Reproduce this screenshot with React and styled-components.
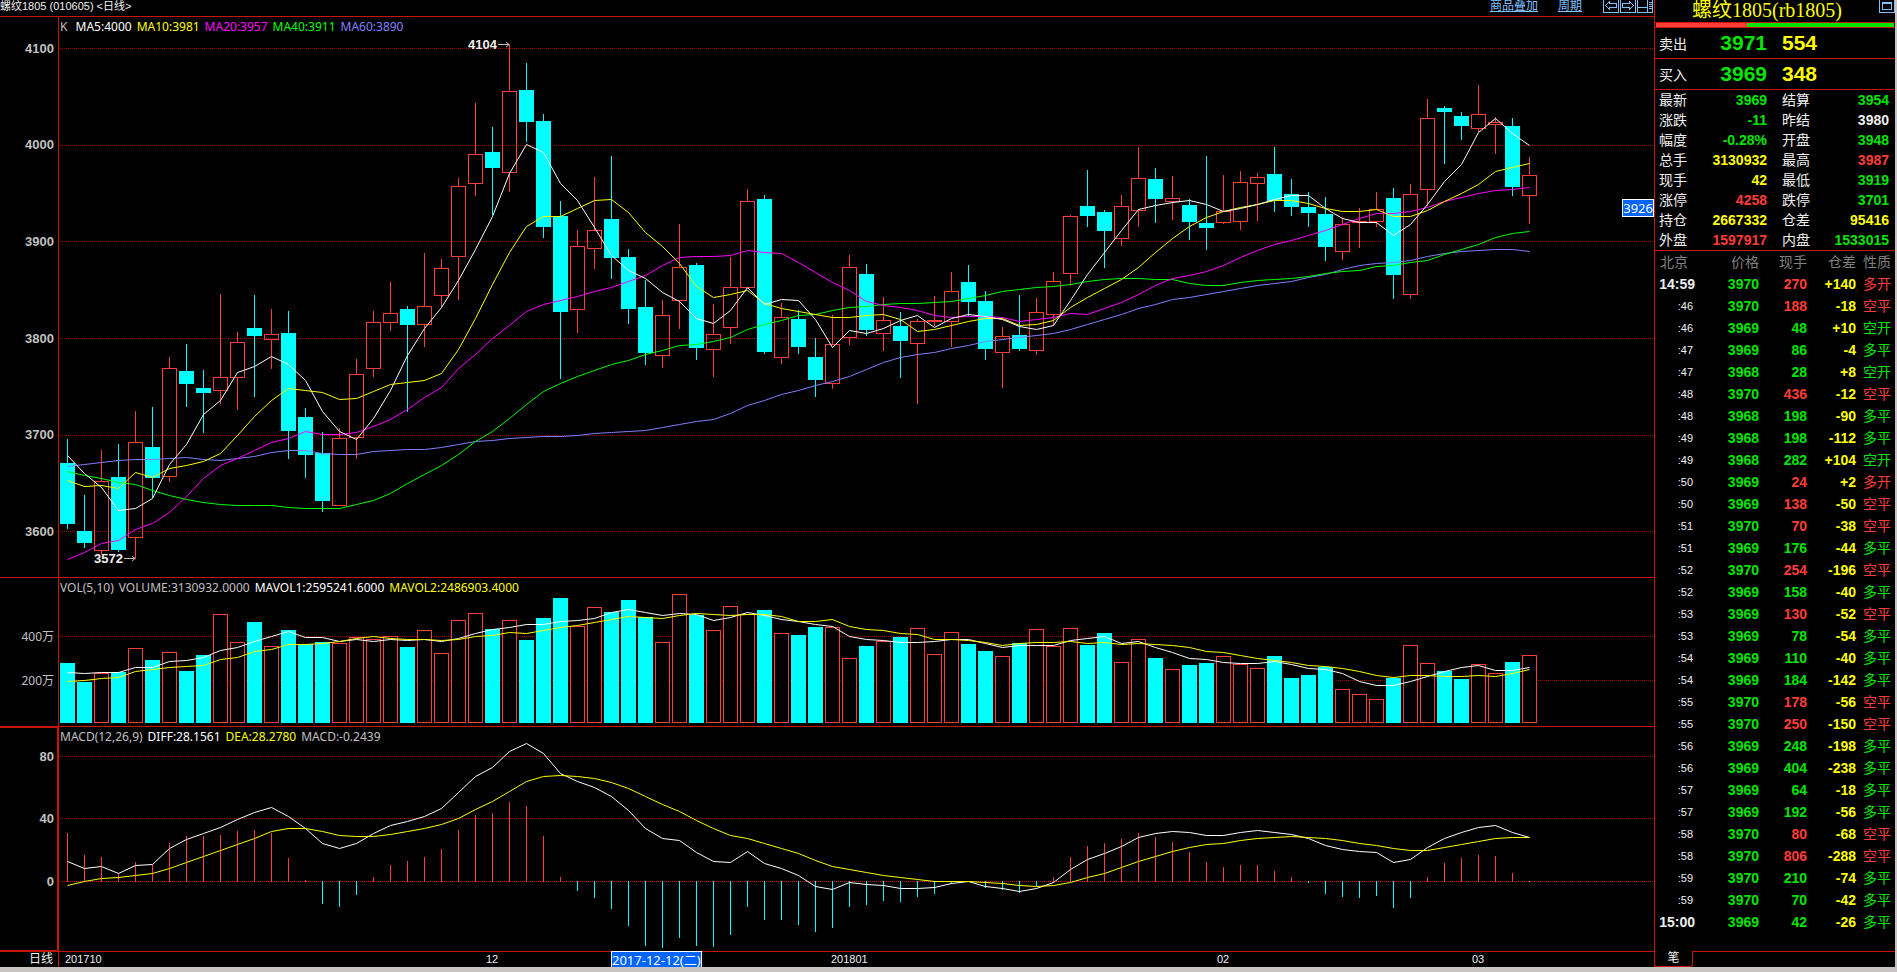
import React from 'react'
import styled, { createGlobalStyle } from 'styled-components'

const RED = '#c8140a'
const UP = '#ff3c37'
const DOWN = '#00ffff'
const GREEN = '#00e600'
const YELLOW = '#ffff00'
const WHITE = '#f0f0f0'
const GRAY = '#808080'
const SILVER = '#c0c0c0'
const LINK = '#80c0ff'

const SLOT = 17
const BODY = 15

const ARIAL = "'Liberation Sans', Arial, 'Noto Sans CJK SC', sans-serif"
const NOTO = "'Noto Sans', 'Noto Sans CJK SC', sans-serif"
const SONG = "'Liberation Serif', 'Noto Sans CJK SC', serif"

// d = falling bar, u = rising bar, then high, body top, body bottom, low
const candles = [
  ['d', 439, 463, 524, 529], ['d', 495, 531, 543, 548], ['u', 450, 481, 550, 555], ['d', 444, 477, 550, 552],
  ['u', 411, 442, 537, 559], ['d', 407, 447, 478, 498], ['u', 357, 368, 476, 482], ['d', 344, 371, 384, 407],
  ['d', 370, 388, 393, 433], ['u', 294, 377, 390, 404], ['u', 332, 342, 377, 410], ['d', 295, 328, 336, 397],
  ['u', 309, 334, 339, 369], ['d', 311, 333, 431, 459], ['d', 408, 417, 455, 478], ['d', 432, 453, 501, 512],
  ['u', 428, 438, 505, 506], ['u', 359, 374, 437, 459], ['u', 311, 322, 368, 377], ['u', 282, 313, 322, 331],
  ['d', 306, 309, 325, 412], ['u', 253, 306, 324, 347], ['u', 259, 268, 295, 307], ['u', 178, 186, 256, 300],
  ['u', 103, 154, 183, 196], ['d', 127, 152, 168, 215], ['u', 44, 91, 172, 192], ['d', 63, 90, 122, 142],
  ['d', 114, 121, 227, 238], ['d', 201, 216, 312, 379], ['u', 230, 246, 309, 333], ['u', 177, 230, 248, 269],
  ['d', 156, 219, 258, 279], ['d', 249, 257, 309, 324], ['d', 280, 307, 353, 365], ['u', 300, 315, 355, 368],
  ['u', 224, 267, 300, 329], ['d', 263, 265, 348, 360], ['u', 304, 334, 349, 377], ['u', 257, 287, 327, 344],
  ['u', 189, 201, 287, 289], ['d', 195, 199, 352, 354], ['u', 303, 317, 357, 364], ['d', 310, 319, 347, 354],
  ['d', 338, 357, 380, 397], ['u', 315, 344, 383, 389], ['u', 255, 267, 337, 345], ['d', 264, 274, 330, 336],
  ['u', 297, 320, 333, 351], ['d', 312, 326, 341, 378], ['u', 319, 321, 343, 404], ['u', 296, 320, 321, 326],
  ['u', 272, 291, 321, 347], ['d', 265, 282, 302, 316], ['d', 291, 301, 349, 360], ['u', 327, 336, 352, 388],
  ['d', 295, 335, 349, 351], ['u', 298, 312, 350, 355], ['u', 272, 281, 314, 325], ['u', 215, 216, 273, 286],
  ['d', 170, 206, 216, 227], ['d', 210, 212, 231, 268], ['u', 195, 206, 238, 246], ['u', 147, 178, 210, 227],
  ['d', 168, 179, 199, 223], ['u', 176, 198, 201, 220], ['d', 199, 205, 222, 240], ['d', 156, 223, 228, 250],
  ['u', 175, 211, 222, 224], ['u', 171, 182, 221, 230], ['u', 173, 177, 183, 221], ['d', 147, 174, 201, 212],
  ['d', 179, 194, 207, 216], ['d', 192, 207, 213, 227], ['d', 197, 214, 247, 261], ['u', 217, 224, 251, 260],
  ['u', 208, 221, 222, 248], ['u', 192, 209, 221, 227], ['d', 188, 198, 275, 299], ['u', 184, 194, 294, 299],
  ['u', 99, 118, 189, 206], ['d', 106, 108, 112, 164], ['d', 112, 116, 126, 140], ['u', 85, 114, 128, 132],
  ['u', 117, 122, 124, 154], ['d', 118, 126, 187, 196], ['u', 157, 175, 195, 224],
]

const averages = [
  {
    color: '#8080ff',
    points: [466, 464, 462, 460, 459, 459, 458, 457, 459, 460, 458, 456, 452, 450, 450, 453, 454, 454, 451, 450, 449, 449, 447, 444, 441, 440, 438, 437, 436, 436, 435, 433, 432, 431, 430, 427, 424, 421, 419, 413, 405, 400, 394, 390, 385, 381, 376, 369, 362, 357, 354, 352, 348, 345, 341, 339, 337, 335, 333, 329, 324, 319, 314, 308, 304, 299, 297, 294, 291, 288, 285, 283, 281, 277, 274, 269, 265, 263, 262, 260, 256, 253, 251, 250, 249, 249, 251],
  },
  {
    color: '#00ff00',
    points: [471, 475, 478, 482, 484, 490, 495, 499, 502, 504, 505, 505, 505, 507, 508, 508, 508, 504, 500, 493, 483, 474, 465, 454, 441, 431, 418, 404, 391, 383, 376, 370, 364, 360, 354, 350, 345, 344, 341, 337, 329, 324, 320, 315, 314, 310, 307, 306, 304, 303, 303, 302, 301, 298, 295, 291, 289, 287, 286, 284, 281, 279, 278, 278, 279, 279, 283, 285, 285, 282, 280, 279, 278, 276, 273, 271, 270, 266, 265, 262, 260, 254, 249, 244, 237, 233, 231],
  },
  {
    color: '#ff00ff',
    points: [559, 552, 543, 540, 529, 523, 512, 496, 478, 465, 458, 450, 442, 438, 431, 434, 434, 432, 426, 419, 409, 397, 387, 368, 354, 338, 325, 311, 304, 300, 296, 291, 287, 281, 275, 265, 257, 256, 256, 255, 250, 252, 253, 262, 272, 282, 290, 301, 305, 307, 310, 315, 317, 316, 316, 317, 321, 319, 317, 313, 314, 308, 302, 294, 285, 278, 275, 271, 265, 257, 250, 244, 240, 235, 230, 224, 218, 213, 213, 211, 207, 201, 197, 193, 190, 189, 187],
  },
  {
    color: YELLOW,
    points: [480, 486, 485, 488, 472, 477, 468, 465, 461, 453, 435, 416, 400, 388, 390, 392, 399, 398, 391, 384, 382, 380, 373, 349, 318, 284, 252, 226, 216, 216, 208, 200, 199, 212, 232, 246, 263, 286, 297, 294, 290, 303, 308, 311, 314, 317, 317, 315, 314, 319, 331, 329, 325, 321, 318, 318, 325, 324, 320, 307, 297, 288, 279, 267, 252, 238, 226, 217, 211, 207, 204, 200, 200, 203, 208, 211, 211, 209, 216, 216, 210, 201, 193, 184, 171, 167, 163],
  },
  {
    color: '#ffffff',
    points: [455, 473, 487, 510, 508, 498, 464, 444, 414, 400, 372, 366, 356, 364, 380, 411, 431, 439, 418, 390, 355, 328, 307, 280, 249, 216, 173, 144, 152, 183, 200, 227, 255, 270, 278, 292, 301, 318, 323, 310, 287, 304, 299, 300, 319, 347, 330, 333, 328, 320, 315, 327, 318, 314, 316, 319, 326, 329, 325, 300, 274, 252, 230, 209, 205, 202, 200, 204, 211, 208, 204, 199, 195, 195, 208, 218, 222, 222, 235, 224, 204, 181, 164, 132, 118, 133, 145],
  },
]

const volumes = [60, 41, 50, 51, 75, 63, 71, 52, 68, 109, 81, 101, 77, 93, 79, 81, 80, 86, 84, 87, 76, 93, 70, 103, 110, 94, 103, 83, 105, 125, 97, 116, 111, 123, 106, 81, 129, 108, 93, 117, 109, 113, 90, 88, 96, 96, 65, 77, 82, 86, 95, 69, 91, 79, 72, 67, 80, 94, 77, 95, 78, 90, 61, 84, 65, 54, 58, 60, 67, 59, 55, 67, 45, 48, 56, 34, 29, 24, 45, 78, 60, 52, 44, 59, 50, 61, 68]

const volumeAverages = [
  {
    color: '#ffffff',
    points: [51, 50, 51, 51, 56, 56, 62, 63, 66, 73, 76, 82, 87, 92, 86, 86, 82, 84, 82, 84, 83, 84, 82, 85, 90, 94, 96, 99, 99, 102, 103, 105, 111, 114, 111, 108, 110, 109, 103, 106, 111, 108, 104, 102, 99, 97, 87, 84, 83, 81, 81, 82, 84, 84, 80, 76, 78, 78, 78, 83, 85, 87, 80, 82, 76, 71, 65, 64, 61, 60, 60, 62, 59, 55, 54, 50, 42, 38, 38, 42, 47, 52, 56, 58, 53, 53, 56],
  },
  {
    color: YELLOW,
    points: [42, 43, 45, 46, 52, 54, 56, 57, 58, 64, 66, 72, 74, 79, 79, 80, 82, 85, 87, 85, 84, 84, 83, 84, 87, 88, 91, 90, 93, 96, 98, 101, 104, 107, 106, 105, 108, 110, 109, 108, 109, 109, 107, 102, 102, 104, 97, 94, 93, 90, 89, 84, 84, 83, 81, 78, 80, 81, 81, 82, 80, 81, 79, 80, 79, 78, 76, 72, 71, 68, 65, 63, 61, 58, 57, 55, 52, 48, 46, 48, 48, 47, 47, 48, 47, 50, 54],
  },
]

const macd = [48, 26, 24, 7, 19, 16, 38, 45, 45, 46, 50, 51, 48, 23, 1, -23, -26, -14, 4, 16, 20, 24, 32, 51, 66, 68, 79, 75, 45, 4, -10, -17, -28, -45, -65, -67, -57, -65, -66, -54, -26, -39, -39, -44, -51, -47, -26, -24, -20, -21, -16, -13, -3, 0, -7, -9, -12, -5, 4, 24, 35, 38, 42, 48, 44, 39, 29, 19, 14, 16, 16, 10, 4, -2, -13, -16, -17, -15, -27, -17, 4, 18, 23, 26, 25, 8, -1]

const macdLines = [
  {
    color: '#ffffff',
    points: [20, 13, 15, 8, 16, 17, 33, 42, 48, 54, 62, 69, 74, 65, 53, 38, 33, 38, 48, 56, 60, 65, 73, 89, 105, 114, 130, 138, 128, 108, 100, 94, 85, 71, 53, 43, 41, 29, 20, 19, 30, 18, 13, 6, -5, -8, -1, -3, -4, -7, -7, -6, -2, 0, -5, -7, -10, -7, -1, 12, 22, 28, 35, 44, 48, 50, 49, 46, 46, 49, 51, 49, 47, 43, 36, 32, 30, 29, 19, 22, 34, 43, 49, 54, 56, 49, 44],
  },
  {
    color: YELLOW,
    points: [-4, 0, 3, 4, 6, 8, 13, 19, 25, 31, 37, 43, 50, 53, 53, 50, 46, 45, 45, 47, 50, 53, 57, 63, 72, 80, 90, 100, 105, 106, 105, 103, 99, 93, 85, 77, 70, 61, 53, 46, 43, 38, 33, 28, 21, 15, 12, 9, 6, 4, 2, 0, 0, 0, -1, -2, -4, -5, -4, -1, 4, 8, 14, 20, 25, 30, 34, 37, 38, 41, 43, 44, 45, 44, 43, 41, 38, 36, 33, 31, 31, 34, 37, 40, 43, 44, 44],
  },
]

const stats = [
  ['最新', '3969', GREEN, '结算', '3954', GREEN],
  ['涨跌', '-11', GREEN, '昨结', '3980', WHITE],
  ['幅度', '-0.28%', GREEN, '开盘', '3948', GREEN],
  ['总手', '3130932', YELLOW, '最高', '3987', UP],
  ['现手', '42', YELLOW, '最低', '3919', GREEN],
  ['涨停', '4258', UP, '跌停', '3701', GREEN],
  ['持仓', '2667332', YELLOW, '仓差', '95416', YELLOW],
  ['外盘', '1597917', UP, '内盘', '1533015', GREEN],
]

// time, price, lots, open interest change, kind
const ticks = [
  ['14:59', 3970, 270, '+140', '多开'],
  [':46', 3970, 188, '-18', '空平'],
  [':46', 3969, 48, '+10', '空开'],
  [':47', 3969, 86, '-4', '多平'],
  [':47', 3968, 28, '+8', '空开'],
  [':48', 3970, 436, '-12', '空平'],
  [':48', 3968, 198, '-90', '多平'],
  [':49', 3968, 198, '-112', '多平'],
  [':49', 3968, 282, '+104', '空开'],
  [':50', 3969, 24, '+2', '多开'],
  [':50', 3969, 138, '-50', '空平'],
  [':51', 3970, 70, '-38', '空平'],
  [':51', 3969, 176, '-44', '多平'],
  [':52', 3970, 254, '-196', '空平'],
  [':52', 3969, 158, '-40', '多平'],
  [':53', 3969, 130, '-52', '空平'],
  [':53', 3969, 78, '-54', '多平'],
  [':54', 3969, 110, '-40', '多平'],
  [':54', 3969, 184, '-142', '多平'],
  [':55', 3970, 178, '-56', '空平'],
  [':55', 3970, 250, '-150', '空平'],
  [':56', 3969, 248, '-198', '多平'],
  [':56', 3969, 404, '-238', '多平'],
  [':57', 3969, 64, '-18', '多平'],
  [':57', 3969, 192, '-56', '多平'],
  [':58', 3970, 80, '-68', '空平'],
  [':58', 3970, 806, '-288', '空平'],
  [':59', 3970, 210, '-74', '多平'],
  [':59', 3970, 70, '-42', '多平'],
  ['15:00', 3969, 42, '-26', '多平'],
]

const GlobalStyle = createGlobalStyle`
  * {
    box-sizing: border-box;
  }
  body {
    margin: 0;
    background: #000;
    color: ${WHITE};
    font-family: ${ARIAL};
  }
`

const Page = styled.div`
  display: flex;
  min-height: 100vh;
  border-right: 2px solid #c8c0c4;
  border-bottom: 5px solid #c8c4c4;
`

const Main = styled.main`
  flex: 1;
  min-width: 0;
  display: flex;
  flex-direction: column;
`

const Header = styled.header`
  display: flex;
  height: 17px;
  border-bottom: 1px solid ${RED};
  line-height: 13px;
`

const Instrument = styled.h1`
  flex: 1;
  margin: 0;
  font-size: 11px;
  font-weight: normal;
  white-space: pre;
`

const HeaderLink = styled.a`
  margin-right: 20px;
  color: ${LINK};
  font-size: 12px;
  text-decoration: underline;
`

const Tools = styled.div`
  display: flex;
  gap: 1px;
  padding: 0 1px;
`

const IconButton = styled.button`
  width: 16px;
  height: 13px;
  padding: 0;
  border: 0;
  background: none;
  cursor: pointer;
  svg {
    display: block;
  }
`

const Pane = styled.section`
  display: flex;
  height: ${p => p.$height + 1}px;
  border-bottom: 1px solid ${RED};
`

const Scale = styled.svg`
  flex: none;
  width: 59px;
  height: 100%;
  border-right: 1px solid ${RED};
  box-shadow: ${p => (p.$active ? `inset -1px 0 ${RED}, inset 0 1px ${RED}, inset 0 -1px ${RED}` : 'none')};
  text {
    fill: ${SILVER};
    font-family: ${p => (p.$thin ? NOTO : ARIAL)};
    font-size: ${p => (p.$thin ? 12 : 13)}px;
    font-weight: ${p => (p.$thin ? 'normal' : 'bold')};
    text-anchor: end;
  }
`

const Plot = styled.div`
  position: relative;
  flex: 1;
  min-width: 0;
`

const Canvas = styled.svg`
  display: block;
  width: 100%;
  height: 100%;
  text {
    fill: ${WHITE};
    font-family: ${ARIAL};
    font-size: 13px;
    font-weight: bold;
    text-anchor: end;
  }
`

const Legend = styled.div`
  position: absolute;
  top: 0;
  left: 1px;
  display: flex;
  gap: 5px;
  line-height: 19px;
  font-family: ${NOTO};
  font-size: 12px;
  white-space: nowrap;
`

const LegendItem = styled.span`
  color: ${p => p.$color};
`

const PriceBadge = styled.div`
  position: absolute;
  top: 182px;
  right: 0;
  border: 1px solid #fff;
  background: #0064ff;
  color: #fff;
  font-family: ${NOTO};
  font-size: 13px;
  line-height: 16px;
`

const TimeAxis = styled.div`
  position: relative;
  display: flex;
  height: 15px;
`

const Period = styled.div`
  width: 59px;
  padding-right: 5px;
  border-right: 1px solid ${RED};
  font-size: 12px;
  line-height: 15px;
  text-align: right;
`

const Months = styled.svg`
  flex: 1;
  min-width: 0;
  height: 15px;
  text {
    fill: ${WHITE};
    font-family: ${ARIAL};
    font-size: 11px;
  }
`

const DateBadge = styled.div`
  position: absolute;
  top: -1px;
  left: 611px;
  height: 16px;
  border: 1px solid #fff;
  border-bottom: 0;
  background: #0064ff;
  color: #fff;
  font-family: ${NOTO};
  font-size: 13px;
  line-height: 16px;
`

const Side = styled.aside`
  flex: none;
  width: 241px;
  display: flex;
  flex-direction: column;
  border-left: 1px solid ${RED};
`

const SideHead = styled.div`
  display: flex;
  height: 22px;
`

const SideTitle = styled.h2`
  flex: 1;
  margin: 0;
  color: ${YELLOW};
  font-family: ${SONG};
  font-size: 20px;
  font-weight: normal;
  line-height: 21px;
  text-align: center;
`

const Meter = styled.div`
  display: flex;
  height: 6px;
  padding: 0 1px;
  border-top: 1px solid ${RED};
  border-bottom: 1px solid ${RED};
`

const MeterPart = styled.div`
  flex: ${p => p.$share};
  background: ${p => p.$color};
`

const Quote = styled.div`
  display: flex;
  align-items: center;
  height: 31px;
  padding-left: 4px;
  border-bottom: 1px solid ${RED};
  font-size: 14px;
`

const QuotePrice = styled.strong`
  width: 80px;
  color: ${GREEN};
  font-size: 21px;
  text-align: right;
`

const QuoteLots = styled.strong`
  margin-left: 15px;
  color: ${YELLOW};
  font-size: 21px;
`

const Stats = styled.dl`
  display: grid;
  grid-template-columns: 108px 1fr;
  column-gap: 15px;
  margin: 0;
  padding: 0 6px 0 4px;
  border-bottom: 1px solid ${RED};
`

const Stat = styled.div`
  display: flex;
  justify-content: space-between;
  font-size: 14px;
  line-height: 20px;
  dd {
    margin: 0;
    color: ${p => p.$color};
    font-weight: bold;
  }
`

const Ticks = styled.table`
  width: 100%;
  border-collapse: collapse;
  table-layout: fixed;
  font-size: 14px;
  tr {
    height: 22px;
  }
`

const Th = styled.th`
  width: ${p => p.$width}px;
  padding: 0;
  color: ${GRAY};
  font-weight: normal;
  line-height: 22px;
  text-align: right;
  &:first-child {
    padding-left: 5px;
    text-align: left;
  }
  &:last-child {
    padding-right: 4px;
  }
`

const Td = styled.td`
  padding: 0 ${p => (p.$small ? 2 : 0)}px 0 0;
  color: ${p => p.$color || WHITE};
  font-weight: ${p => (p.$thin ? 'normal' : 'bold')};
  font-size: ${p => (p.$small ? 11 : 14)}px;
  line-height: 22px;
  text-align: right;
  &:last-child {
    padding-right: 4px;
  }
`

const Tabs = styled.div`
  display: flex;
  height: 16px;
  margin-top: auto;
`

const Tab = styled.button`
  width: 39px;
  margin-left: -1px;
  padding: 0;
  border: 1px solid ${RED};
  border-top: 0;
  border-radius: 0 0 3px 3px;
  background: #000;
  color: ${WHITE};
  font-family: ${ARIAL};
  font-size: 12px;
  line-height: 15px;
`

const TabRest = styled.div`
  flex: 1;
  border-top: 1px solid ${RED};
`

const center = i => i * SLOT + 8.5

const toPoints = (values, y) => values.map((v, i) => `${center(i)},${y(v)}`).join(' ')

const GridLine = ({ y, color = '#a00000' }) => (
  <line x1="1" x2="100%" y1={y + 0.5} y2={y + 0.5} stroke={color} strokeDasharray="1 1" shapeRendering="crispEdges" />
)

const Lines = ({ lines, y }) =>
  lines.map((line, i) => <polyline key={i} points={toPoints(line.points, y)} fill="none" stroke={line.color} />)

const Candle = ({ index, data }) => {
  const [kind, high, top, bottom, low] = data
  const x = index * SLOT + 1
  const color = kind === 'u' ? UP : DOWN
  return (
    <g stroke={color} shapeRendering="crispEdges">
      <line x1={center(index)} x2={center(index)} y1={high} y2={top} />
      <line x1={center(index)} x2={center(index)} y1={bottom} y2={low} />
      {kind === 'u' ? (
        <rect x={x + 0.5} y={top + 0.5} width={BODY - 1} height={bottom - top} fill="none" />
      ) : (
        <rect x={x} y={top} width={BODY} height={bottom - top} fill={color} stroke="none" />
      )}
    </g>
  )
}

const VolumeBar = ({ index, height, base }) => {
  const x = index * SLOT + 1
  return candles[index][0] === 'u' ? (
    <rect x={x + 0.5} y={base - height + 0.5} width={BODY - 1} height={height - 1} fill="#000" stroke={UP} shapeRendering="crispEdges" />
  ) : (
    <rect x={x} y={base - height} width={BODY} height={height} fill={DOWN} shapeRendering="crispEdges" />
  )
}

const Mark = ({ x, y, children }) => (
  <g>
    <text x={x - 12} y={y + 5}>{children}</text>
    <path d={`M${x - 11} ${y + 0.5}H${x} M${x - 3} ${y - 2}L${x} ${y + 0.5}L${x - 3} ${y + 3}`} fill="none" stroke={SILVER} />
  </g>
)

const Icon = ({ d }) => (
  <svg width="16" height="13" viewBox="0 0 16 13" fill="none" stroke={LINK} shapeRendering="crispEdges">
    <path d={`M.5 0V12.5H15.5V0 ${d}`} />
  </svg>
)

const PricePane = () => (
  <Pane $height={560}>
    <Scale>
      {[4100, 4000, 3900, 3800, 3700, 3600].map((v, i) => (
        <text key={v} x="54" y={36 + Math.floor(i * 96.7)}>{v}</text>
      ))}
    </Scale>
    <Plot>
      <Canvas>
        <g transform="translate(0 -17)">
          {[48, 145, 241, 338, 435, 531].map(y => <GridLine key={y} y={y} />)}
          {candles.map((c, i) => <Candle key={i} index={i} data={c} />)}
          <Lines lines={averages} y={v => v + 0.5} />
          <Mark x={450} y={44}>4104</Mark>
          <Mark x={76} y={558}>3572</Mark>
        </g>
      </Canvas>
      <Legend>
        <LegendItem $color={SILVER}>K&nbsp;</LegendItem>
        <LegendItem $color="#fff">MA5:4000</LegendItem>
        <LegendItem $color={YELLOW}>MA10:3981</LegendItem>
        <LegendItem $color="#ff00ff">MA20:3957</LegendItem>
        <LegendItem $color="#00ff00">MA40:3911</LegendItem>
        <LegendItem $color="#8080ff">MA60:3890</LegendItem>
      </Legend>
      <PriceBadge>3926</PriceBadge>
    </Plot>
  </Pane>
)

const VolumePane = () => (
  <Pane $height={148}>
    <Scale $thin>
      <text x="54" y="63">400万</text>
      <text x="54" y="107">200万</text>
    </Scale>
    <Plot>
      <Canvas>
        <GridLine y={58} />
        <GridLine y={102} />
        {volumes.map((v, i) => <VolumeBar key={i} index={i} height={v} base={145} />)}
        <Lines lines={volumeAverages} y={v => 145.5 - v} />
      </Canvas>
      <Legend>
        <LegendItem $color={SILVER}>VOL(5,10)</LegendItem>
        <LegendItem $color={SILVER}>VOLUME:3130932.0000</LegendItem>
        <LegendItem $color="#fff">MAVOL1:2595241.6000</LegendItem>
        <LegendItem $color={YELLOW}>MAVOL2:2486903.4000</LegendItem>
      </Legend>
    </Plot>
  </Pane>
)

const MacdPane = () => (
  <Pane $height={224}>
    <Scale $active>
      <text x="54" y="34">80</text>
      <text x="54" y="96">40</text>
      <text x="54" y="159">0</text>
    </Scale>
    <Plot>
      <Canvas>
        <GridLine y={29} />
        <GridLine y={91} />
        <GridLine y={154} color={RED} />
        {macd.map((v, i) => (
          <line key={i} x1={center(i)} x2={center(i)} y1={v > 0 ? 155 : 154} y2={154 - v} stroke={v > 0 ? UP : DOWN} shapeRendering="crispEdges" />
        ))}
        <Lines lines={macdLines} y={v => 154.5 - v} />
      </Canvas>
      <Legend>
        <LegendItem $color={SILVER}>MACD(12,26,9)</LegendItem>
        <LegendItem $color="#fff">DIFF:28.1561</LegendItem>
        <LegendItem $color={YELLOW}>DEA:28.2780</LegendItem>
        <LegendItem $color={SILVER}>MACD:-0.2439</LegendItem>
      </Legend>
    </Plot>
  </Pane>
)

const QuotePanel = () => (
  <Side>
    <SideHead>
      <SideTitle>螺纹1805(rb1805)</SideTitle>
      <IconButton aria-label="窗口">
        <Icon d="M3.5 2.5H12.5V9.5H3.5Z M3.5 3.5H12.5" />
      </IconButton>
    </SideHead>
    <Meter>
      <MeterPart $share={91} $color={UP} />
      <MeterPart $share={147} $color={GREEN} />
    </Meter>
    <Quote>
      卖出
      <QuotePrice>3971</QuotePrice>
      <QuoteLots>554</QuoteLots>
    </Quote>
    <Quote>
      买入
      <QuotePrice>3969</QuotePrice>
      <QuoteLots>348</QuoteLots>
    </Quote>
    <Stats>
      {stats.map(([label, value, color, label2, value2, color2]) => (
        <React.Fragment key={label}>
          <Stat $color={color}><dt>{label}</dt><dd>{value}</dd></Stat>
          <Stat $color={color2}><dt>{label2}</dt><dd>{value2}</dd></Stat>
        </React.Fragment>
      ))}
    </Stats>
    <Ticks>
      <thead>
        <tr>
          <Th $width={40}>北京</Th>
          <Th $width={64}>价格</Th>
          <Th $width={48}>现手</Th>
          <Th $width={49}>仓差</Th>
          <Th $width={39}>性质</Th>
        </tr>
      </thead>
      <tbody>
        {ticks.map(([time, price, lots, change, kind], i) => {
          const color = kind === '多开' || kind === '空平' ? UP : GREEN
          const short = time.length < 5
          return (
            <tr key={i}>
              <Td $thin={short} $small={short}>{time}</Td>
              <Td $color={GREEN}>{price}</Td>
              <Td $color={color}>{lots}</Td>
              <Td $color={YELLOW}>{change}</Td>
              <Td $color={color} $thin>{kind}</Td>
            </tr>
          )
        })}
      </tbody>
    </Ticks>
    <Tabs>
      <Tab>笔</Tab>
      <TabRest />
    </Tabs>
  </Side>
)

export default () => (
  <Page>
    <GlobalStyle />
    <Main>
      <Header>
        <Instrument>{'螺纹1805 (010605) <日线>'}</Instrument>
        <HeaderLink href="#overlay">商品叠加</HeaderLink>
        <HeaderLink href="#period">周期</HeaderLink>
        <Tools>
          <IconButton aria-label="左移">
            <Icon d="M2.5 5.5L6.5 1.5V3.5H13.5V7.5H6.5V9.5Z" />
          </IconButton>
          <IconButton aria-label="右移">
            <Icon d="M13.5 5.5L9.5 1.5V3.5H2.5V7.5H9.5V9.5Z" />
          </IconButton>
          <IconButton aria-label="布局">
            <Icon d="M.5 7.5H10.5 M10.5 0V12 M12 2.5H15 M12 4.5H15 M12 6.5H15 M12 8.5H15" />
          </IconButton>
        </Tools>
      </Header>
      <PricePane />
      <VolumePane />
      <MacdPane />
      <TimeAxis>
        <Period>日线</Period>
        <Months>
          <text x="6" y="11">201710</text>
          <text x="427" y="11">12</text>
          <text x="772" y="11">201801</text>
          <text x="1158" y="11">02</text>
          <text x="1413" y="11">03</text>
        </Months>
        <DateBadge>2017-12-12(二)</DateBadge>
      </TimeAxis>
    </Main>
    <QuotePanel />
  </Page>
)
